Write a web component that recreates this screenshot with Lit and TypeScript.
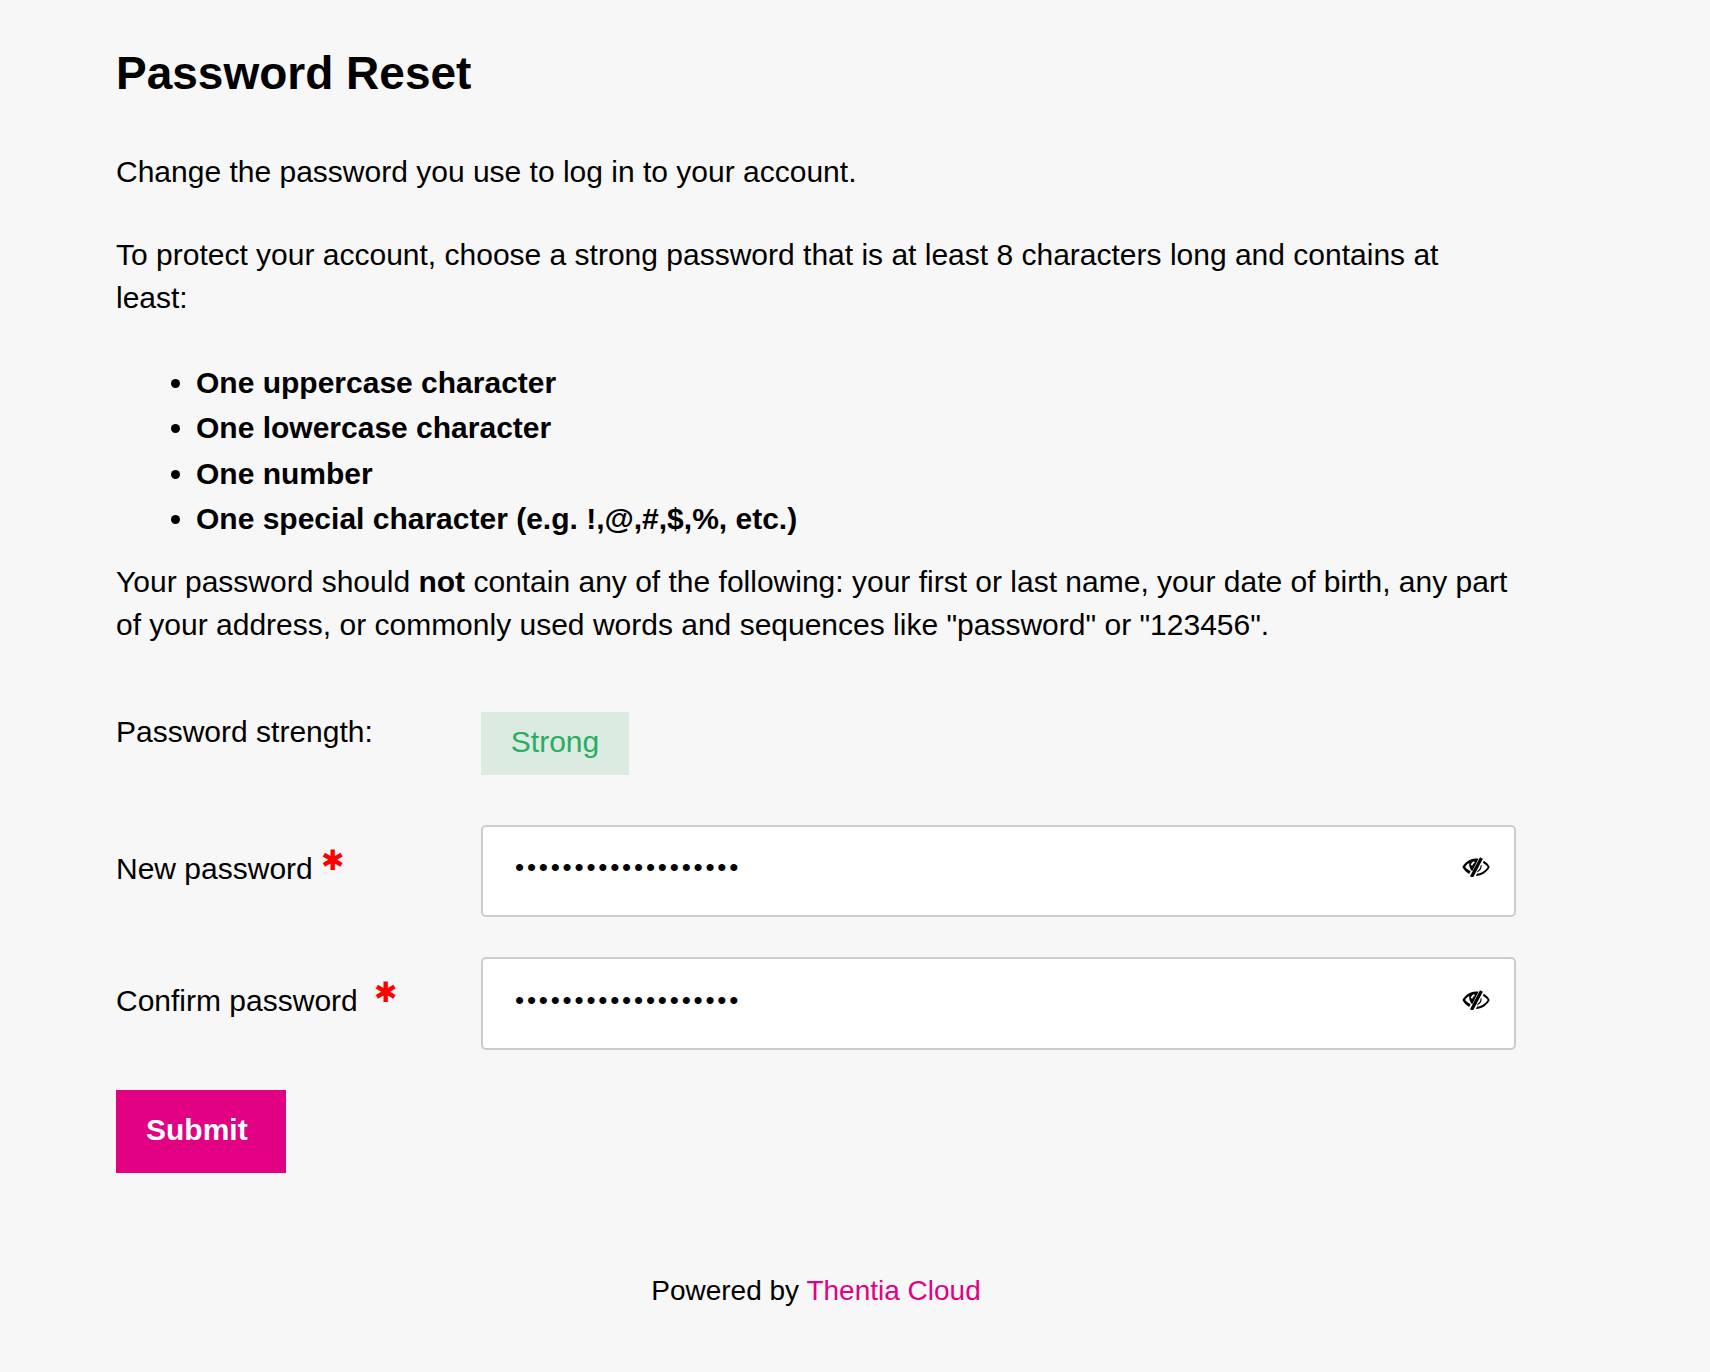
import { LitElement, html, css } from "lit";
import { customElement } from "lit/decorators.js";

const eye = html`<svg class="eye" viewBox="0 0 28 20" width="28" height="20" aria-hidden="true">
  <path fill="#000" d="M16.500 1.800C9.500.4 3.500 4.500.4 10c1.500 2.900 3.800 5.200 6.800 6.900l1.500-2.800c-2.300-1.100-4.200-2.500-5.500-4.100C4 8.300 5.500 7 7.300 6c-.5 2.900.6 6 2.900 8.200Z"/>
  <path fill="#000" d="M8 19.300 18 .3l2.900 1.500-10 19Z"/>
  <path fill="#000" d="M21.700 3.700c2.600 1.300 4.600 3.500 6 6.300-2.500 5.200-7.900 8.900-13.900 9.100l1.300-2.500c4.400-.3 8.600-3 10.600-6.600-1.100-1.700-2.800-3.200-4.900-4.300Z"/>
  <path fill="#000" d="M19.500 8c.6 3.400-1.500 6.500-4.700 7.400l.9-1.700C17.500 12.700 18.700 10.500 18.500 8.500Z"/>
  <path fill="#fff" d="M12.300 4.300c-1.900.4-3.300 2-3.500 4l1.700.1c.1-1.200 1-2.200 2.200-2.500Z"/>
</svg>`;

@customElement("app-root")
export class AppRoot extends LitElement {
  static styles = css`
    :host {
      display: block;
      min-height: 1372px;
      background: #f7f7f7;
      color: #000;
      font-family: "Liberation Sans", Arial, Helvetica, sans-serif;
      font-size: 30px;
      line-height: 43px;
    }
    .page {
      width: 1400px;
      padding: 46px 0 0 116px;
    }
    h1 {
      margin: 0 0 50px;
      font-size: 46px;
      line-height: 54px;
      font-weight: 700;
    }
    p { margin: 0; }
    .intro { margin-bottom: 40px; }
    ul {
      margin: 41px 0 0;
      padding: 0 0 0 80px;
      font-weight: 700;
      line-height: 45.400px;
    }
    .warn { margin-top: 18px; }
    .row {
      display: grid;
      grid-template-columns: 365px 1035px;
      align-items: start;
    }
    .strength-row { margin-top: 64px; }
    .badge {
      display: flex;
      align-items: center;
      justify-content: center;
      box-sizing: border-box;
      width: 148px;
      height: 63px;
      margin-top: 2px;
      padding-bottom: 3px;
      background: #dbebe2;
      color: #27ae60;
    }
    .new-row { margin-top: 50px; }
    .confirm-row { margin-top: 40px; }
    .field-label { padding-top: 22px; white-space: nowrap; }
    .star {
      color: #f00;
      font-family: "DejaVu Sans", sans-serif;
      font-size: 28px;
      line-height: 0;
      font-weight: 700;
      vertical-align: 9px;
    }
    .star.wide { margin-left: 8px; }
    .input {
      box-sizing: border-box;
      height: 92px;
      background: #fff;
      border: 2px solid #ccc;
      border-radius: 5px;
      display: flex;
      justify-content: space-between;
      padding: 22px 24px 0 32px;
    }
    .confirm-row .input { height: 93px; padding-top: 23px; }
    .dots {
      font-size: 26px;
      line-height: 36px;
      letter-spacing: 2.800px;
    }
    .eye { margin-top: 8px; }
    .submit {
      display: block;
      margin-top: 40px;
      width: 170px;
      height: 83px;
      border: 0;
      padding: 0 0 2px 30px;
      text-align: left;
      background: #e20083;
      color: #fff;
      font: 700 30px "Liberation Sans", Arial, sans-serif;
    }
    footer {
      margin-top: 96px;
      text-align: center;
      font-size: 28px;
    }
    a { color: #e20083; text-decoration: none; }
  `;

  render() {
    return html`<div class="page">
      <h1>Password Reset</h1>
      <p class="intro">Change the password you use to log in to your account.</p>
      <p>To protect your account, choose a strong password that is at least 8 characters long and contains at least:</p>
      <ul>
        <li>One uppercase character</li>
        <li>One lowercase character</li>
        <li>One number</li>
        <li>One special character (e.g. !,@,#,$,%, etc.)</li>
      </ul>
      <p class="warn">Your password should <b>not</b> contain any of the following: your first or last name, your date of birth, any part of your address, or commonly used words and sequences like "password" or "123456".</p>
      <div class="row strength-row">
        <div>Password strength:</div>
        <div class="badge">Strong</div>
      </div>
      <div class="row new-row">
        <div class="field-label">New password <span class="star">✱</span></div>
        <div class="input"><span class="dots">•••••••••••••••••••</span>${eye}</div>
      </div>
      <div class="row confirm-row">
        <div class="field-label">Confirm password <span class="star wide">✱</span></div>
        <div class="input"><span class="dots">•••••••••••••••••••</span>${eye}</div>
      </div>
      <button class="submit">Submit</button>
      <footer>Powered by <a href="#">Thentia Cloud</a></footer>
    </div>`;
  }
}
